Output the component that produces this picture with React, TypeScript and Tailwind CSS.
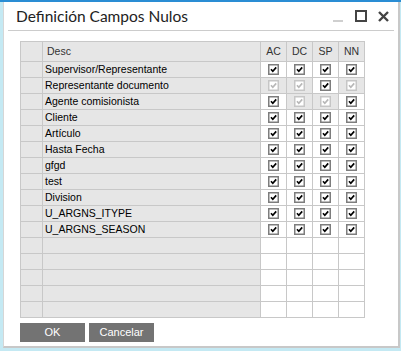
import React from "react";

type Cell = "on" | "off" | "dis";

const rows: { desc: string; cells: Cell[] }[] = [
  { desc: "Supervisor/Representante", cells: ["on", "on", "on", "on"] },
  { desc: "Representante documento", cells: ["dis", "dis", "on", "dis"] },
  { desc: "Agente comisionista", cells: ["on", "dis", "dis", "on"] },
  { desc: "Cliente", cells: ["on", "on", "on", "on"] },
  { desc: "Artículo", cells: ["on", "on", "on", "on"] },
  { desc: "Hasta Fecha", cells: ["on", "on", "on", "on"] },
  { desc: "gfgd", cells: ["on", "on", "on", "on"] },
  { desc: "test", cells: ["on", "on", "on", "on"] },
  { desc: "Division", cells: ["on", "on", "on", "on"] },
  { desc: "U_ARGNS_ITYPE", cells: ["on", "on", "on", "on"] },
  { desc: "U_ARGNS_SEASON", cells: ["on", "on", "on", "on"] },
];

const Check = ({ disabled }: { disabled?: boolean }) => (
  <svg width="11" height="11" viewBox="0 0 11 11">
    <rect
      x="0.75"
      y="0.75"
      width="9.5"
      height="9.5"
      fill="#fff"
      stroke={disabled ? "#c6c6c6" : "#7d7d7d"}
      strokeWidth="1.5"
    />
    <path
      d="M3 5.2 L4.8 7.2 L8.2 3.4"
      fill="none"
      stroke={disabled ? "#b8b8b8" : "#000"}
      strokeWidth="1.7"
    />
  </svg>
);

export default function App() {
  const empty = [0, 1, 2, 3, 4];
  return (
    <div
      className="w-[401px] h-[351px] bg-[#c4e9f3] border-t-2 border-[#2a8dd4] overflow-hidden"
      style={{ fontFamily: '"Liberation Sans", Arial, sans-serif' }}
    >
      <div className="ml-[3px] mr-px h-[346px] bg-white border-l border-[#d6d6d6] border-r-2 border-b-2 border-r-[#c8c8c8] border-b-[#c8c8c8] flex flex-col">
        <div className="h-[28px] flex items-center pl-3 pr-[9px]">
          <span
            className="text-[15.5px] text-[#222] flex-1 pt-px"
            style={{ fontFamily: "Lato, sans-serif" }}
          >
            Definición Campos Nulos
          </span>
          <div className="w-[10px] h-[2px] bg-[#cfcfcf] mt-[9px] mr-3" />
          <div className="w-[12px] h-[12px] border-2 border-[#444] mr-[11px]" />
          <svg width="11" height="11" viewBox="0 0 11 11">
            <path d="M1 1 L10 10 M10 1 L1 10" stroke="#444" strokeWidth="2.4" />
          </svg>
        </div>
        <div className="h-px bg-[#cccccc] ml-[4px] mr-[4px]" />

        <div className="ml-4 mt-[10px] w-[345px] grid grid-cols-[21px_217px_25px_25px_25px_25px] gap-px p-px bg-[#c8c8c8] text-[10.5px] text-black">
          <div className="h-[19px] bg-[#e6e6e6]" />
          <div className="h-[19px] bg-[#e6e6e6] flex items-center pl-[4px] text-[#333]">Desc</div>
          {["AC", "DC", "SP", "NN"].map((h) => (
            <div key={h} className="h-[19px] bg-[#e6e6e6] flex items-center justify-center text-[#333]">
              {h}
            </div>
          ))}
          {rows.map((r) => (
            <React.Fragment key={r.desc}>
              <div className="h-[15px] bg-[#e6e6e6]" />
              <div className="h-[15px] bg-[#e6e6e6] flex items-center pl-[2px]">{r.desc}</div>
              {r.cells.map((c, i) => (
                <div
                  key={i}
                  className={
                    c === "dis"
                      ? "h-[15px] bg-[#e6e6e6] flex items-center justify-center"
                      : "h-[15px] bg-white flex items-center justify-center"
                  }
                >
                  <Check disabled={c === "dis"} />
                </div>
              ))}
            </React.Fragment>
          ))}
          {empty.map((e) => (
            <React.Fragment key={e}>
              <div className="h-[15px] bg-[#e6e6e6]" />
              <div className="h-[15px] bg-[#e6e6e6]" />
              <div className="h-[15px] bg-white" />
              <div className="h-[15px] bg-white" />
              <div className="h-[15px] bg-white" />
              <div className="h-[15px] bg-white" />
            </React.Fragment>
          ))}
        </div>

        <div className="ml-4 mt-[5px] flex gap-1">
          <button className="w-[65px] h-[19px] bg-[#737373] text-white text-[11px]">OK</button>
          <button className="w-[65px] h-[19px] bg-[#737373] text-white text-[11px]">Cancelar</button>
        </div>
      </div>
    </div>
  );
}
